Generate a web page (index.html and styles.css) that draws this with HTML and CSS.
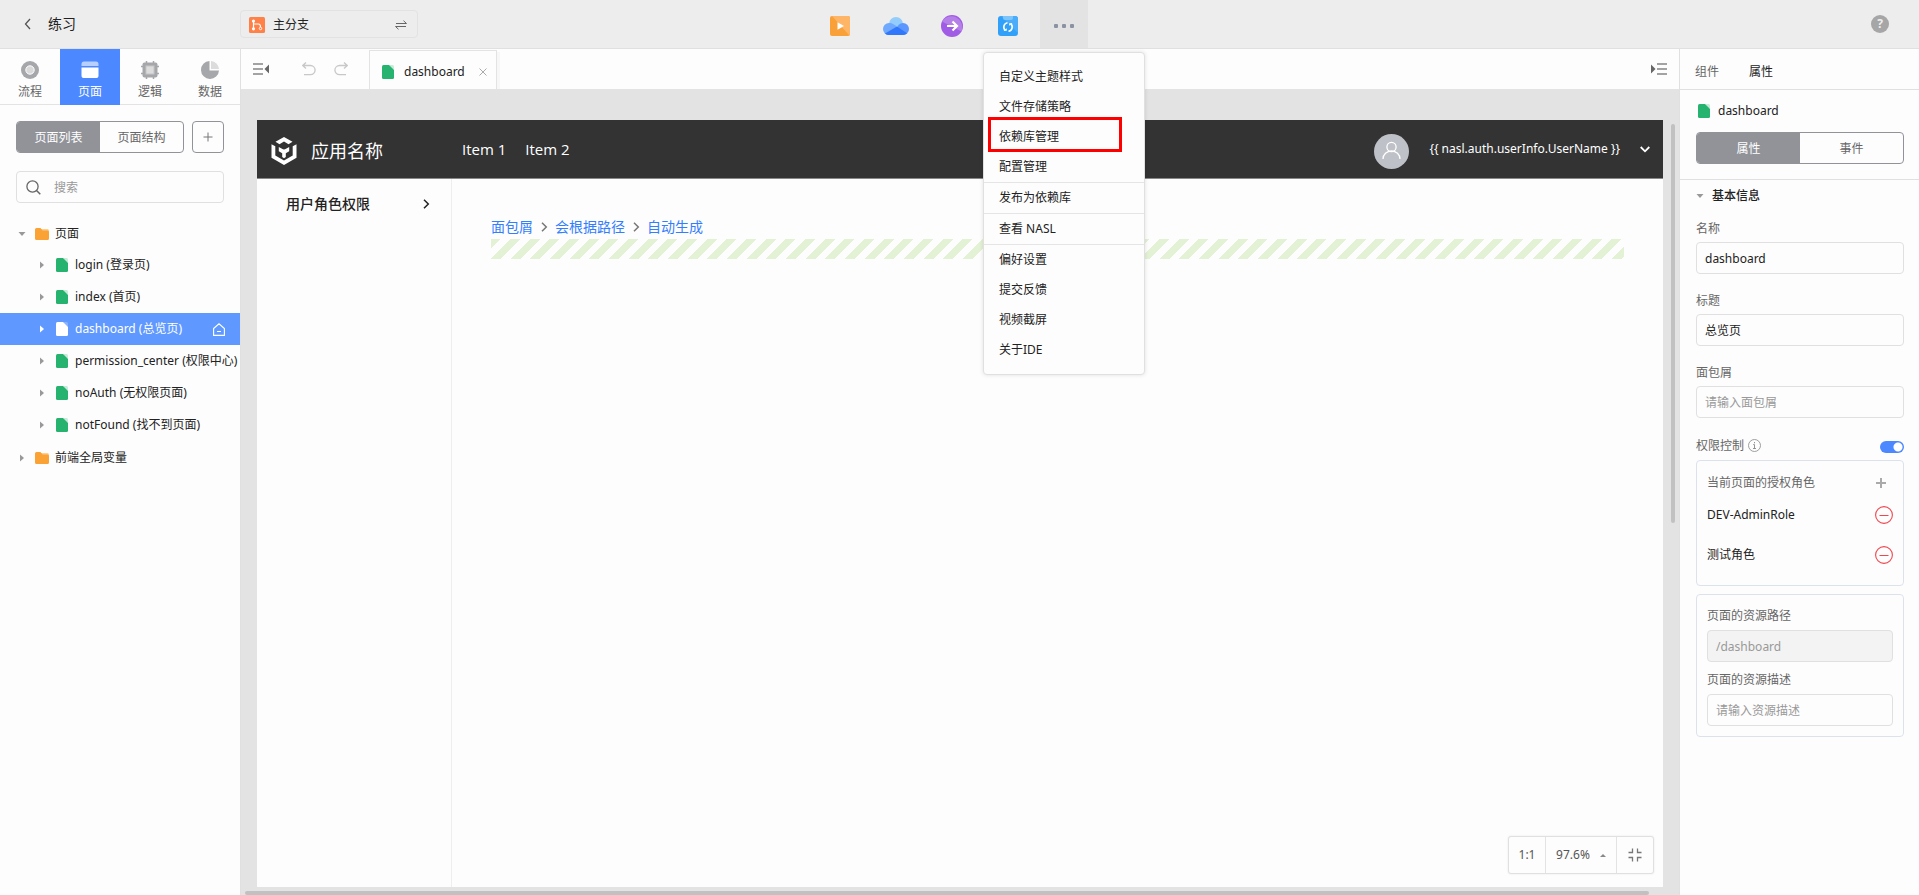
FILE: index.html
```html
<!DOCTYPE html>
<html lang="zh-CN">
<head>
<meta charset="utf-8">
<title>练习</title>
<link rel="stylesheet" href="styles.css">
</head>
<body>
<svg class="defs" aria-hidden="true">
  <symbol id="file" viewBox="0 0 12 14"><path d="M0 1.500Q0 0 1.500 0H7l5 5v7.500q0 1.500-1.500 1.500h-9Q0 14 0 12.500z" fill="currentColor"/><path d="M7.500 0H10.500Q12 0 12 1.500V4.500H8.500q-1 0-1-1z" fill="currentColor" opacity=".25"/></symbol>
  <symbol id="folder" viewBox="0 0 14 12"><path d="M6 1h6.500Q14 1 14 2.500V4H6z" fill="#fdcf8f"/><path d="M0 1.500Q0 0 1.500 0h4l2 2.500h5Q14 2.500 14 4v6.500q0 1.500-1.500 1.500h-11Q0 12 0 10.500z" fill="#fba234"/></symbol>
  <symbol id="tri-right" viewBox="0 0 8 8"><path d="M2 0.500 6 4 2 7.500z" fill="currentColor"/></symbol>
  <symbol id="tri-down" viewBox="0 0 8 8"><path d="M.5 2h7L4 6z" fill="currentColor"/></symbol>
  <symbol id="chev-right" viewBox="0 0 10 10"><path d="M3 .7 7.300 5 3 9.300" fill="none" stroke="currentColor" stroke-width="1.500"/></symbol>
  <symbol id="minus" viewBox="0 0 18 18"><circle cx="9" cy="9" r="8.400" fill="none" stroke="currentColor" stroke-width="1.100"/><path d="M4.500 9.500h9" stroke="currentColor"/></symbol>
</svg>

<header class="topbar">
  <div class="topbar-left">
    <div class="project">
      <button class="plain" aria-label="返回"><svg width="8" height="12" viewBox="0 0 8 12"><path d="M6 1 1.500 6 6 11" fill="none" stroke="#555" stroke-width="1.300"/></svg></button>
      <span>练习</span>
    </div>
    <button class="branch">
      <svg width="16" height="16" viewBox="0 0 16 16"><rect width="16" height="16" rx="1.500" fill="#ff8148"/><g fill="none" stroke="#fff"><path d="M4.500 5v6M4.500 7h5q2 0 2 3" stroke-width="1.200"/><circle cx="11.500" cy="11.500" r="1.200"/></g><circle cx="4.500" cy="4" r="1.600" fill="#fff"/><circle cx="4.500" cy="11.800" r="1.600" fill="#fff"/></svg>
      <span>主分支</span>
      <svg width="12" height="10" viewBox="0 0 12 10"><path d="M1 3.500h10.500L8.500.7M11 6.500H.5l3 2.800" fill="none" stroke="#666"/></svg>
    </button>
  </div>

  <nav class="toolbar">
    <button class="tool" aria-label="预览"><svg width="20" height="20" viewBox="0 0 20 20"><rect width="20" height="20" rx="2" fill="#faa038"/><path d="M2 0h16q2 0 2 2v16q0 1-.6 1.400z" fill="#ffb566"/><path d="M7.500 6.200 14 10l-6.500 3.800z" fill="#fff"/></svg></button>
    <button class="tool" aria-label="发布"><svg width="26" height="18" viewBox="0 0 26 18"><path d="M6 7a7 7 0 0 1 14 0l-6 4z" fill="#94ccfb"/><circle cx="6" cy="12" r="6" fill="#6fa8ff"/><circle cx="20" cy="12" r="6" fill="#5b97ff"/><path d="M6 6q4 0 8 4l-6 5H4z" fill="#6fa8ff"/><path d="M2 16.500 14 9.500l10 6.700q-1.500 1.800-4 1.800H6q-2.500 0-4-1.500z" fill="#3077fb"/></svg></button>
    <button class="tool" aria-label="流转"><svg width="22" height="22" viewBox="0 0 22 22"><circle cx="11" cy="11" r="11" fill="#a15ce6"/><path d="M1 6.500a11 11 0 0 1 19.500 10z" fill="#b57fe8"/><path d="M6 11h9.500M11.500 6.500 16 11l-4.500 4.500" fill="none" stroke="#fff" stroke-width="2.200"/></svg></button>
    <button class="tool" aria-label="同步"><svg width="20" height="20" viewBox="0 0 20 20"><rect width="20" height="20" rx="3" fill="#31a0f8"/><path d="M3 0h14q3 0 3 3v14z" fill="#4badfa"/><path d="M5 0h10v2q0 2-2 2H7Q5 4 5 2z" fill="#7cc4fc"/><path d="M9.500 6.800A4.300 4.300 0 0 0 7.300 14.300M10.500 15.200A4.300 4.300 0 0 0 12.700 7.700" fill="none" stroke="#fff" stroke-width="1.600"/><path d="M5.500 14.800h3.300v-2.500zM14.500 7.200h-3.300v2.500z" fill="#fff"/></svg></button>
    <div class="more">
      <button class="more-button" aria-label="更多"><svg width="20" height="4" viewBox="0 0 20 4" fill="#8b93a3"><rect width="4" height="4" rx="1"/><rect x="8" width="4" height="4" rx="1"/><rect x="16" width="4" height="4" rx="1"/></svg></button>
      <div class="menu">
        <button>自定义主题样式</button>
        <button>文件存储策略</button>
        <button class="marked">依赖库管理</button>
        <button>配置管理</button>
        <hr>
        <button>发布为依赖库</button>
        <hr>
        <button>查看 NASL</button>
        <hr>
        <button>偏好设置</button>
        <button>提交反馈</button>
        <button>视频截屏</button>
        <button>关于IDE</button>
      </div>
    </div>
  </nav>

  <button class="help">?</button>
</header>

<div class="workspace">
  <aside class="left">
    <nav class="modes">
      <button><svg width="18" height="18" viewBox="0 0 18 18"><circle cx="9" cy="9" r="9" fill="#a6a7aa"/><circle cx="9" cy="9" r="4.200" fill="#d9d9da" stroke="#fff"/></svg>流程</button>
      <button class="active"><svg width="18" height="18" viewBox="0 0 18 18"><path d="M.5 5V3Q.5.500 3 .500h12Q17.500.500 17.500 3v2z" fill="#b7cfff"/><path d="M.5 6.500h17V15q0 2-2 2h-13q-2 0-2-2z" fill="#fff"/></svg>页面</button>
      <button><svg width="18" height="18" viewBox="0 0 18 18"><path d="M5.500 0v18M12.500 0v18M0 5.500h18M0 12.500h18" stroke="#a6a7aa" stroke-width="1.500"/><rect x="1.500" y="1.500" width="15" height="15" rx="2" fill="#a6a7aa"/><rect x="5" y="5" width="8" height="8" fill="#dcdcdd" stroke="#c5c5c7"/></svg>逻辑</button>
      <button><svg width="18" height="18" viewBox="0 0 18 18"><path d="M8.500 0a9 9 0 1 0 9.500 9.500H8.500z" fill="#a6a7aa"/><path d="M10 0a9 9 0 0 1 8 8h-8z" fill="#dcdcdd"/></svg>数据</button>
    </nav>
    <div class="list-head">
      <div class="segmented"><button class="active">页面列表</button><button>页面结构</button></div>
      <button class="add" aria-label="新建"><svg width="10" height="10" viewBox="0 0 10 10"><path d="M5 .5v9M.5 5h9" stroke="#777"/></svg></button>
    </div>
    <label class="search">
      <svg width="15" height="15" viewBox="0 0 15 15"><circle cx="6.500" cy="6.500" r="5.600" fill="none" stroke="#666" stroke-width="1.300"/><path d="m10.500 10.500 3.800 3.800" stroke="#666" stroke-width="1.500"/></svg>
      <input type="text" placeholder="搜索" aria-label="搜索">
    </label>
    <ul class="tree">
      <li class="root"><svg class="tri"><use href="#tri-down"/></svg><svg class="folder"><use href="#folder"/></svg>页面</li>
      <li><svg class="tri"><use href="#tri-right"/></svg><svg class="file"><use href="#file"/></svg>login (登录页)</li>
      <li><svg class="tri"><use href="#tri-right"/></svg><svg class="file"><use href="#file"/></svg>index (首页)</li>
      <li class="selected"><svg class="tri"><use href="#tri-right"/></svg><svg class="file"><use href="#file"/></svg>dashboard (总览页)<svg class="home" viewBox="0 0 12 13"><path d="M.6 5.500 6 .8l5.400 4.700v6.900H.6zM4 8.500h4" fill="none" stroke="#fff" stroke-width="1.100"/></svg></li>
      <li><svg class="tri"><use href="#tri-right"/></svg><svg class="file"><use href="#file"/></svg>permission_center (权限中心)</li>
      <li><svg class="tri"><use href="#tri-right"/></svg><svg class="file"><use href="#file"/></svg>noAuth (无权限页面)</li>
      <li><svg class="tri"><use href="#tri-right"/></svg><svg class="file"><use href="#file"/></svg>notFound (找不到页面)</li>
      <li class="root"><svg class="tri"><use href="#tri-right"/></svg><svg class="folder"><use href="#folder"/></svg>前端全局变量</li>
    </ul>
  </aside>

  <main class="center">
    <div class="tabbar">
      <div class="actions">
        <button class="plain" aria-label="收起左侧"><svg width="16" height="12" viewBox="0 0 16 12"><path d="M0 1h10M0 6h10M0 11h10" stroke="#a3a3a3" stroke-width="2"/><path d="M16 1.500v9L11.500 6z" fill="#666"/></svg></button>
        <button class="plain undo" aria-label="撤销"><svg width="14" height="14" viewBox="0 0 14 14"><path d="M4 .5.800 3.500 4 6.500M1 3.500h7.500a4.500 4.500 0 0 1 0 9.200H2" fill="none" stroke="#c8c8c8" stroke-width="1.300"/></svg></button>
        <button class="plain" aria-label="重做"><svg width="14" height="14" viewBox="0 0 14 14"><path d="m10 .5 3.200 3-3.200 3M13 3.500H5.500a4.500 4.500 0 0 0 0 9.200H12" fill="none" stroke="#c8c8c8" stroke-width="1.300"/></svg></button>
      </div>
      <div class="tab"><svg class="file"><use href="#file"/></svg><span>dashboard</span>
        <button class="plain" aria-label="关闭"><svg width="8" height="8" viewBox="0 0 8 8"><path d="m.5.500 7 7m0-7-7 7" stroke="#aaa"/></svg></button></div>
      <button class="plain collapse" aria-label="收起右侧"><svg width="16" height="12" viewBox="0 0 16 12"><path d="M6 1h10M6 6h10M6 11h10" stroke="#a3a3a3" stroke-width="2"/><path d="M0 1.500v9L4.500 6z" fill="#666"/></svg></button>
    </div>

    <div class="canvas">
      <div class="page">
        <header class="page-head">
          <svg width="26" height="28" viewBox="0 0 26 28" fill="#fff"><path d="M13 0 21.500 4.800 17.500 7.200 13 4.600 8.500 7.200 4.500 4.800z"/><path d="M.5 7.200 4.300 9.300v9.200l8.700 5 8.700-5V9.300l3.800-2.100v13.500L13 28 .5 20.700z"/><path d="M7.800 10 11 11.700q2 1.600 4 0L18.200 10v4.200l-3.400 2V20L13 21.200 11.200 20v-3.800l-3.400-2z"/></svg>
          <span class="app-name">应用名称</span>
          <nav><a href="#">Item 1</a><a href="#">Item 2</a></nav>
          <div class="user">
            <svg width="35" height="35" viewBox="0 0 35 35"><circle cx="17.500" cy="17.500" r="17.500" fill="#bfc1c8"/><g fill="none" stroke="#fff" stroke-width="1.300"><circle cx="17.500" cy="13" r="4.600"/><path d="M9 25a8.500 8 0 0 1 17 0"/></g></svg>
            <span>{{ nasl.auth.userInfo.UserName }}</span>
            <svg width="10" height="7" viewBox="0 0 10 7"><path d="M.7 1 5 5.300 9.300 1" fill="none" stroke="#fff" stroke-width="1.800"/></svg>
          </div>
        </header>
        <div class="page-body">
          <aside class="page-side"><a href="#">用户角色权限<svg width="10" height="10"><use href="#chev-right"/></svg></a></aside>
          <section class="page-main">
            <nav class="crumbs"><a href="#">面包屑</a><svg width="10" height="10"><use href="#chev-right"/></svg><a href="#">会根据路径</a><svg width="10" height="10"><use href="#chev-right"/></svg><a href="#">自动生成</a></nav>
            <div class="stripes"></div>
          </section>
        </div>
      </div>
      <div class="scroll-y"></div>
      <div class="scroll-x"></div>
      <div class="zoom">
        <button>1:1</button>
        <button class="percent">97.6%<svg width="6" height="3" viewBox="0 0 6 3"><path d="M0 3 3 0l3 3z" fill="#888"/></svg></button>
        <button aria-label="适应"><svg width="14" height="14" viewBox="0 0 14 14"><path d="M.5 4.500h4v-4M9.500.500v4h4M.5 9.500h4v4M9.500 13.500v-4h4" fill="none" stroke="#777" stroke-width="1.300"/></svg></button>
      </div>
    </div>
  </main>

  <aside class="right">
    <nav class="right-tabs"><button>组件</button><button class="active">属性</button></nav>
    <div class="right-head">
      <div class="target"><svg class="file"><use href="#file"/></svg>dashboard</div>
      <div class="segmented"><button class="active">属性</button><button>事件</button></div>
    </div>
    <div class="props">
      <h2><svg class="tri"><use href="#tri-down"/></svg>基本信息</h2>
      <div class="field"><label for="name">名称</label><input id="name" type="text" value="dashboard"></div>
      <div class="field"><label for="title">标题</label><input id="title" type="text" value="总览页"></div>
      <div class="field"><label for="crumb">面包屑</label><input id="crumb" type="text" placeholder="请输入面包屑"></div>
      <div class="auth"><label for="auth">权限控制</label><svg width="13" height="13" viewBox="0 0 13 13"><circle cx="6.500" cy="6.500" r="6" fill="none" stroke="#888" stroke-width=".8"/><path d="M6.500 3v1.300M5.200 5.600h1.300v3.900M5 9.500h3" fill="none" stroke="#888" stroke-width=".9"/></svg><input id="auth" type="checkbox" checked></div>
      <div class="card roles">
        <div class="role-title">当前页面的授权角色<button class="plain" aria-label="添加"><svg width="10" height="10" viewBox="0 0 10 10"><path d="M5 0v10M0 5h10" stroke="#aaa" stroke-width="2"/></svg></button></div>
        <div class="role">DEV-AdminRole<button class="plain" aria-label="移除"><svg width="18" height="18"><use href="#minus"/></svg></button></div>
        <div class="role">测试角色<button class="plain" aria-label="移除"><svg width="18" height="18"><use href="#minus"/></svg></button></div>
      </div>
      <div class="card resource">
        <label for="path">页面的资源路径</label><input id="path" type="text" value="/dashboard" disabled>
        <label for="desc">页面的资源描述</label><input id="desc" type="text" placeholder="请输入资源描述">
      </div>
    </div>
  </aside>
</div>
</body>
</html>
```
FILE: styles.css
```css
* { box-sizing: border-box; }

body {
  margin: 0;
  height: 100vh;
  display: flex;
  flex-direction: column;
  overflow: hidden;
  background: #fdfdfd;
  color: #222;
  font: 12px/16px "Noto Sans", "Noto Sans CJK SC", sans-serif;
}

button, input { font: inherit; color: inherit; }
button { padding: 0; border: 0; background: none; }
a { color: inherit; text-decoration: none; }
svg { display: block; flex: none; }
.plain { display: flex; }
.defs { position: absolute; width: 0; height: 0; }
.file { width: 12px; height: 14px; color: #26b36f; }
.folder { width: 14px; height: 12px; }
.tri { width: 8px; height: 8px; color: #999; }

/* Top bar */
.topbar {
  display: grid;
  grid-template-columns: 1fr auto 1fr;
  align-items: center;
  flex: none;
  height: 49px;
  padding-right: 15px;
  background: #ededed;
  border-bottom: 1px solid #e0e0e0;
}
.topbar-left { display: flex; align-items: center; }
.project {
  display: flex;
  align-items: center;
  gap: 16px;
  width: 240px;
  padding-left: 24px;
  font-size: 14px;
}
.branch {
  display: flex;
  align-items: center;
  gap: 8px;
  width: 178px;
  height: 28px;
  padding: 2px 10px 0 8px;
  border: 1px solid #e2e2e2;
  border-radius: 4px;
}
.branch svg:last-child { margin-left: auto; }
.toolbar { display: flex; gap: 8px; }
.tool {
  display: flex;
  align-items: center;
  justify-content: center;
  width: 48px;
  height: 48px;
  padding-top: 4px;
}
.more { position: relative; }
.more-button {
  display: flex;
  align-items: center;
  justify-content: center;
  width: 48px;
  height: 48px;
  padding-top: 4px;
  background: #e3e3e3;
}
.menu {
  position: absolute;
  z-index: 5;
  top: 52px;
  right: -57px;
  width: 162px;
  padding: 9px 0;
  background: #fdfdfd;
  border: 1px solid #e0e0e0;
  border-radius: 4px;
  box-shadow: 0 0 4px rgba(0, 0, 0, .12);
}
.menu button {
  display: block;
  position: relative;
  width: 100%;
  height: 30px;
  padding: 0 15px;
  text-align: left;
}
.menu hr { margin: 0; border: 0; border-top: 1px solid #e5e5e5; }
.marked::after {
  content: "";
  position: absolute;
  inset: -5px 22px 0 4px;
  border: 3px solid #f00;
}
.help {
  justify-self: end;
  width: 18px;
  height: 18px;
  margin-right: 15px;
  border-radius: 50%;
  background: #a6a6a6;
  color: #eee;
  font-weight: 700;
}

.workspace { display: flex; flex: 1; min-height: 0; }

/* Left panel */
.left {
  flex: none;
  width: 241px;
  border-right: 1px solid #e0e0e0;
}
.modes { display: flex; height: 56px; box-shadow: inset 0 -1px #e3e3e3; }
.modes button {
  display: flex;
  flex: 1;
  flex-direction: column;
  align-items: center;
  gap: 5px;
  padding-top: 12px;
  color: #666;
}
.modes .active { background: #4c88ff; color: #fff; }
.list-head { display: flex; gap: 8px; padding: 16px 16px 18px; }
.segmented {
  display: flex;
  flex: 1;
  height: 32px;
  border: 1px solid #919399;
  border-radius: 4px;
  overflow: hidden;
}
.segmented button { flex: 1; padding-top: 1px; color: #666; }
.segmented .active { background: #919399; color: #fff; }
.add {
  display: flex;
  align-items: center;
  justify-content: center;
  width: 32px;
  border: 1px solid #919399;
  border-radius: 4px;
}
.search {
  display: flex;
  align-items: center;
  gap: 13px;
  height: 32px;
  margin: 0 16px;
  padding: 1px 9px 0;
  border: 1px solid #e0e0e0;
  border-radius: 4px;
}
.search input { width: 100%; padding: 0; border: 0; outline: 0; background: none; }
::placeholder { color: #999; opacity: 1; }
.tree { margin: 14px 0 0; padding: 0; list-style: none; }
.tree li {
  display: flex;
  align-items: center;
  gap: 7px;
  height: 32px;
  padding: 0 15px 0 38px;
  white-space: nowrap;
}
.tree .file { margin: 0 0 0 3px; }
.tree .root { gap: 6px; padding: 1px 0 0 18px; }
.root .tri { margin-right: 3px; }
.tree .selected { background: #5f99ff; color: #fff; }
.selected .tri, .selected .file { color: #fff; }
.home { width: 12px; height: 13px; margin-left: auto; }

/* Centre */
.center { display: flex; flex: 1; flex-direction: column; min-width: 0; }
.tabbar { display: flex; flex: none; height: 40px; }
.actions { display: flex; align-items: center; gap: 18px; width: 128px; padding-left: 12px; }
.undo { margin-left: 15px; }
.tab {
  display: flex;
  align-items: center;
  gap: 10px;
  margin-top: 1px;
  padding: 3px 9px 0 12px;
  border: solid #e3e3e3;
  border-width: 1px 1px 0;
  box-shadow: 3px 2px 0 #f7f7f7;
}
.tab .plain { margin-left: 4px; }
.collapse { align-items: center; margin: 0 12px 0 auto; }
.canvas {
  display: flex;
  flex: 1;
  position: relative;
  min-height: 0;
  padding: 31px 16px 8px;
  background: #e3e3e3;
}
.page { display: flex; flex: 1; flex-direction: column; background: #fdfdfd; }
.page-head {
  display: flex;
  align-items: center;
  flex: none;
  height: 59px;
  padding: 0 13px 0 14px;
  border-bottom: 1px solid #888;
  background: #333;
  color: #fff;
  font-family: "Open Sans", "Noto Sans CJK SC", sans-serif;
}
.page-head > svg { margin-top: 4px; }
.app-name { width: 151px; margin-left: 14px; padding-top: 4px; font-size: 18px; line-height: 24px; }
.page-head nav { display: flex; gap: 19px; font-size: 15px; }
.user { display: flex; align-items: center; margin-left: auto; gap: 20px; font-family: "Noto Sans", sans-serif; }
.user > svg:first-child { margin-top: 4px; }
.page-body { display: flex; flex: 1; }
.page-side { width: 195px; border-right: 1px solid #eee; padding: 13px 20px 0 29px; }
.page-side a {
  display: flex;
  align-items: center;
  justify-content: space-between;
  height: 24px;
  font-size: 14px;
  font-weight: 500;
}
.page-main { flex: 1; padding: 38px 39px 0; }
.crumbs { display: flex; align-items: center; gap: 6px; height: 20px; margin-bottom: 2px; font-size: 14px; color: #337eff; }
.crumbs svg { color: #777; }
/* Three 45-degree bands per 59px tile */
.stripes {
  height: 20px;
  background: repeating-linear-gradient(135deg, #e3f2d5 0 calc(5900% / 474), transparent 0 calc(5900% / 237)) 0 0 / 59px 20px;
}
.scroll-y, .scroll-x { position: absolute; background: #c1c1c1; border-radius: 2px; }
.scroll-y { top: 35px; right: 4px; width: 4px; height: calc(50% - 4px); }
.scroll-x { bottom: 0; left: 4px; right: 30px; height: 4px; }
.zoom {
  display: flex;
  position: absolute;
  right: 25px;
  bottom: 21px;
  height: 38px;
  border: 1px solid #e0e0e0;
  border-radius: 3px;
  background: #fdfdfd;
  color: #555;
  box-shadow: 0 0 2px rgba(0, 0, 0, .1);
}
.zoom button { display: flex; align-items: center; justify-content: center; width: 36px; }
.zoom .percent { width: 72px; gap: 10px; border: solid #e3e3e3; border-width: 0 1px; }

/* Right panel */
.right { flex: none; width: 240px; border-left: 1px solid #e0e0e0; }
.right-tabs {
  display: flex;
  gap: 30px;
  height: 41px;
  padding: 6px 15px 0;
  border-bottom: 1px solid #e0e0e0;
  color: #666;
}
.right-tabs .active { color: #222; }
.right-head { padding: 13px 15px 15px 16px; border-bottom: 1px solid #e0e0e0; }
.target { display: flex; align-items: center; gap: 8px; height: 16px; margin-bottom: 13px; padding-left: 2px; }
.props { padding: 8px 15px 0 16px; }
.props h2 {
  display: flex;
  align-items: center;
  gap: 8px;
  height: 16px;
  margin: 0 0 17px;
  font-size: 12px;
  font-weight: 500;
}
.field { margin-bottom: 19px; }
.props label { display: block; color: #666; }
.props input[type="text"] {
  display: block;
  width: 100%;
  height: 32px;
  margin-top: 5px;
  padding: 0 8px;
  border: 1px solid #e0e0e0;
  border-radius: 4px;
  outline: 0;
  background: #fdfdfd;
}
.props input:disabled { color: #999; }
.auth { display: flex; align-items: center; gap: 4px; height: 17px; margin-bottom: 6px; }
#auth {
  appearance: none;
  width: 24px;
  height: 12px;
  margin: 2px 0 0 auto;
  border-radius: 6px;
  background: radial-gradient(circle at 18px 6px, #fff 4px, #4c88ff 5px);
}
.card { margin-bottom: 8px; padding: 0 10px; border: 1px solid #dce2ec; border-radius: 4px; }
.roles { padding: 10px; }
.role-title, .role { display: flex; align-items: center; justify-content: space-between; }
.role-title { height: 24px; padding-right: 7px; color: #666; }
.role { height: 40px; color: #222; }
.role button { color: #f0474f; }
.resource { padding: 13px 10px 10px; }
.resource input + label { margin-top: 10px; }
.props .resource input[type="text"] { margin-top: 6px; }
.props .resource input[type="text"]:disabled { background: #f3f3f3; }
```
